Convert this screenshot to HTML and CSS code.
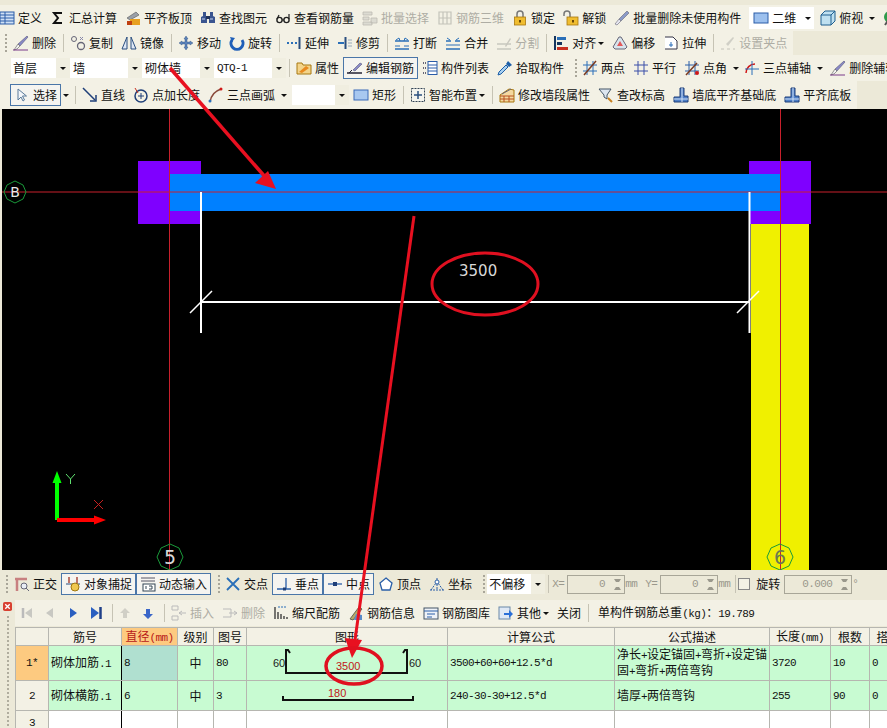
FILE: index.html
```html
<!DOCTYPE html>
<html lang="zh-CN">
<head>
<meta charset="utf-8">
<title>钢筋编辑</title>
<link rel="stylesheet" href="styles.css">
</head>
<body>
<div class="page">
  <div class="bar r1">
    <div class="it"><svg class="ic" viewBox="0 0 16 16"><rect x="1" y="2" width="14" height="12" fill="#cfe0f5" stroke="#2a5ca8"/><path d="M1 5h14M1 8h14M1 11h14M6 2v12" stroke="#2a5ca8"/></svg><span>定义</span></div>
    <div class="it"><svg class="ic" viewBox="0 0 16 16"><path d="M12 3H4l4 5-4 5h8" fill="none" stroke="#111" stroke-width="2"/></svg><span>汇总计算</span></div>
    <div class="it"><svg class="ic" viewBox="0 0 16 16"><path d="M2 8l9-6 3 3-9 5z" fill="#9aa0a8" stroke="#555" stroke-width=".6"/><rect x="5" y="9" width="10" height="6" fill="#e8a020"/><rect x="2" y="11" width="5" height="4" fill="#c04010"/></svg><span>平齐板顶</span></div>
    <div class="it"><svg class="ic" viewBox="0 0 16 16"><path d="M3 2h3v4l1 1v6H1V7l2-1zM10 2h3v4l2 1v6H9V7l1-1z" fill="#3a5590"/><rect x="6" y="6" width="4" height="3" fill="#22345c"/><path d="M2 9h3M10 9h3" stroke="#c9d6ee"/></svg><span>查找图元</span></div>
    <div class="it"><svg class="ic" viewBox="0 0 16 16"><circle cx="4.500" cy="10" r="2.600" fill="none" stroke="#222" stroke-width="1.400"/><circle cx="11.500" cy="10" r="2.600" fill="none" stroke="#222" stroke-width="1.400"/><path d="M2 9l2-4M14 9V4M7 10h2" stroke="#222" stroke-width="1.200" fill="none"/></svg><span>查看钢筋量</span></div>
    <div class="it off"><svg class="ic" viewBox="0 0 16 16"><path d="M1 2h9v3H1zM1 7h6v3H1zM1 12h9v3H1zM9 8h6v5H9z" fill="#dcdbd2" stroke="#bcbbb2" stroke-width=".8"/></svg><span>批量选择</span></div>
    <div class="it off"><svg class="ic" viewBox="0 0 16 16"><path d="M2 2h12v12H2zM6 2v12M10 2v12M2 8h12" fill="none" stroke="#c4c3ba" stroke-width="1.200"/></svg><span>钢筋三维</span></div>
    <div class="it"><svg class="ic" viewBox="0 0 16 16"><path d="M5 7V4a3 3 0 016 0v3" fill="none" stroke="#777" stroke-width="1.500"/><rect x="2.500" y="7" width="11" height="8" fill="#f0bd30" stroke="#a87810" stroke-width=".8"/><rect x="7" y="10" width="2" height="2.500" fill="#6a4806"/></svg><span>锁定</span></div>
    <div class="it"><svg class="ic" viewBox="0 0 16 16"><path d="M1 6V4a3 3 0 016 0v3" fill="none" stroke="#777" stroke-width="1.500"/><rect x="4" y="7" width="11" height="8" fill="#f0bd30" stroke="#a87810" stroke-width=".8"/><rect x="9" y="10" width="2" height="2.500" fill="#6a4806"/></svg><span>解锁</span></div>
    <div class="it"><svg class="ic" viewBox="0 0 16 16"><path d="M13 1l2 2-8 8-2-2z" fill="#8a9ac8" stroke="#556" stroke-width=".5"/><path d="M5 9l2 2-4 4-2-1z" fill="#e6e6f0" stroke="#667" stroke-width=".6"/></svg><span>批量删除未使用构件</span></div>
    <div class="view"><svg class="ic" viewBox="0 0 16 16"><rect x="1" y="3" width="14" height="10" fill="#9cc0ee" stroke="#2a5ca8"/></svg><span>二维</span><i class="ar in"></i></div>
    <div class="it tight"><svg class="ic" viewBox="0 0 16 16"><path d="M1 5l4-4h10v10l-4 4H1z" fill="#bfe0f0" stroke="#1f5f8f"/><path d="M1 5h10v10M11 5l4-4" fill="none" stroke="#1f5f8f"/></svg><span>俯视</span></div>
    <i class="ar far"></i>
    <div class="it"><svg class="ic" viewBox="0 0 16 16"><circle cx="8" cy="7" r="6" fill="#2e9a4a"/><path d="M3 15l4-6" stroke="#555" stroke-width="2"/></svg></div>
  </div>

  <div class="bar r2">
    <i class="grip"></i>
    <div class="it"><svg class="ic" viewBox="0 0 16 16"><path d="M14 1l1 1-8 9-2-2z" fill="#8a8ac8" stroke="#446" stroke-width=".5"/><path d="M5 9l2 2-3 3-3 1z" fill="#f2f2f2" stroke="#555" stroke-width=".6"/><path d="M0 15h15" stroke="#7a3a8a"/></svg><span>删除</span></div>
    <i class="sep"></i>
    <div class="it"><svg class="ic" viewBox="0 0 16 16"><circle cx="4" cy="4" r="2.500" fill="none" stroke="#667" stroke-width="1"/><circle cx="11" cy="11" r="3.500" fill="none" stroke="#667" stroke-width="1.300"/><path d="M10 2l3 3M13 2l-3 3" stroke="#88a"/></svg><span>复制</span></div>
    <div class="it"><svg class="ic" viewBox="0 0 16 16"><path d="M6 2L1 14h5zM10 2l5 12h-5z" fill="#dfe8f5" stroke="#2a4f7f"/></svg><span>镜像</span></div>
    <i class="sep"></i>
    <div class="it"><svg class="ic" viewBox="0 0 16 16"><path d="M8 1l2 3H9v3h3V6l3 2-3 2V9H9v3h1l-2 3-2-3h1V9H4v1L1 8l3-2v1h3V4H6z" fill="#5b82b8" stroke="#2a4f7f" stroke-width=".4"/></svg><span>移动</span></div>
    <div class="it"><svg class="ic" viewBox="0 0 16 16"><path d="M3 5a6 6 0 1010 0" fill="none" stroke="#1f5fb8" stroke-width="3"/><path d="M1 2l5 1-3 4z" fill="#1f5fb8"/></svg><span>旋转</span></div>
    <i class="sep"></i>
    <div class="it"><svg class="ic" viewBox="0 0 16 16"><path d="M1 7h2v2H1zM5 7h2v2H5zM9 7h2v2H9z" fill="#2a6fb8"/><path d="M13.500 2v12" stroke="#2a4f7f" stroke-width="2"/></svg><span>延伸</span></div>
    <div class="it"><svg class="ic" viewBox="0 0 16 16"><path d="M1 8h6" stroke="#2a6fb8" stroke-width="2"/><path d="M8.500 2v12" stroke="#2a4f7f" stroke-width="2"/><path d="M11 5h4M11 8h4M11 11h4" stroke="#9ab" /></svg><span>修剪</span></div>
    <i class="sep"></i>
    <div class="it"><svg class="ic" viewBox="0 0 16 16"><path d="M1 6h14M1 14h14" stroke="#2a6fb8" stroke-width="1.500"/><path d="M5 3L2 5M5 3l1 3M11 3l3 2M11 3l-1 3M6 11H1M10 11h5" stroke="#2a6fb8"/></svg><span>打断</span></div>
    <div class="it"><svg class="ic" viewBox="0 0 16 16"><path d="M1 6h5M10 6h5M1 14h14" stroke="#2a6fb8" stroke-width="1.500"/><path d="M2 3l3 2M14 3l-3 2M1 10h14" stroke="#2a6fb8"/></svg><span>合并</span></div>
    <div class="it off"><svg class="ic" viewBox="0 0 16 16"><path d="M1 9h14M1 14h14" stroke="#c8c7be" stroke-width="1.300"/><path d="M9 11l5-8 1 1-5 8z" fill="#c8c7be"/></svg><span>分割</span></div>
    <i class="sep"></i>
    <div class="it"><svg class="ic" viewBox="0 0 16 16"><path d="M2 1v14" stroke="#16365f" stroke-width="2"/><rect x="4" y="2" width="9" height="3" fill="#2a6fb8"/><rect x="4" y="7" width="5" height="3" fill="#16365f"/><rect x="4" y="12" width="11" height="3" fill="#c83020"/></svg><span>对齐</span></div>
    <i class="ar"></i>
    <div class="it"><svg class="ic" viewBox="0 0 16 16"><path d="M1 12l6-10h2l6 10-2 2H3z" fill="#d8e4ec" stroke="#667"/><path d="M5 11l3-5 3 5z" fill="#e25a5a"/></svg><span>偏移</span></div>
    <div class="it"><svg class="ic" viewBox="0 0 16 16"><path d="M2 2h8l4 4v8H2" fill="#fff" stroke="#334"/><path d="M8 7v5M6 10h4" stroke="#2a6fb8"/></svg><span>拉伸</span></div>
    <i class="sep"></i>
    <div class="it off"><svg class="ic" viewBox="0 0 16 16"><path d="M13 2l1 1-6 8-2-2z" fill="#d0cfc6"/><path d="M1 14h3M7 14h3M13 14h2" stroke="#c4c3ba"/></svg><span>设置夹点</span></div>
  </div>

  <div class="bar r3">
    <div class="sels">
      <div class="sel s-a"><span>首层</span><i class="ar sa"></i></div>
      <div class="sel s-b"><span>墙</span><i class="ar sa"></i></div>
      <div class="sel s-b"><span>砌体墙</span><i class="ar sa"></i></div>
      <div class="sel s-b"><span class="m">QTQ-1</span><i class="ar sa"></i></div>
    </div>
    <i class="sep pull"></i>
    <div class="it"><svg class="ic" viewBox="0 0 16 16"><path d="M1 3h5l1 2h8v9H1z" fill="#f3d48a" stroke="#a87810"/><path d="M3 12l7-6 3 2-7 5z" fill="#e88a20"/></svg><span>属性</span></div>
    <div class="it on"><svg class="ic" viewBox="0 0 16 16"><path d="M13 3l2 1-7 7-2-1z" fill="#8a8ac8" stroke="#446" stroke-width=".5"/><path d="M0 13h15" stroke="#223" stroke-width="1.500"/><path d="M5 10l-3 3" stroke="#223"/></svg><span>编辑钢筋</span></div>
    <div class="it"><svg class="ic" viewBox="0 0 16 16"><path d="M1 3h3M1 8h3M1 13h3" stroke="#667" stroke-width="2" stroke-dasharray="1 1"/><rect x="6" y="1.500" width="9" height="13" fill="#fff" stroke="#2a5ca8"/><path d="M6 5h9M6 8h9M6 11h9" stroke="#2a5ca8"/></svg><span>构件列表</span></div>
    <div class="it"><svg class="ic" viewBox="0 0 16 16"><path d="M11 1l4 4-3 2-3-3z" fill="#1d5fa8"/><path d="M9 5l2 2-7 7-3 1 1-3z" fill="#a8d0f0" stroke="#1d5fa8"/></svg><span>拾取构件</span></div>
    <i class="grip"></i>
    <div class="it"><svg class="ic" viewBox="0 0 16 16"><path d="M5 1v14M11 1v14M1 5h14M1 11h14" stroke="#2a6fb8"/><path d="M2 15L14 1" stroke="#7a3a20" stroke-width="1.500"/></svg><span>两点</span></div>
    <div class="it"><svg class="ic" viewBox="0 0 16 16"><path d="M5 1v14M11 1v14M1 5h14M1 11h14" stroke="#3a4fa8"/></svg><span>平行</span></div>
    <div class="it"><svg class="ic" viewBox="0 0 16 16"><path d="M5 1v14M11 1v14M1 5h14M1 11h14" stroke="#2a5fa8"/><path d="M2 15L13 3" stroke="#7a3a20" stroke-width="1.500"/><circle cx="13" cy="13" r="2" fill="#d01818"/></svg><span>点角</span></div>
    <i class="ar far"></i>
    <div class="it tight"><svg class="ic" viewBox="0 0 16 16"><path d="M2 13a9 9 0 019-9" fill="none" stroke="#d01818" stroke-width="1.500"/><path d="M8 1v14M1 9h14" stroke="#2a6fb8"/></svg><span>三点辅轴</span></div>
    <i class="ar far"></i>
    <div class="it"><svg class="ic" viewBox="0 0 16 16"><path d="M14 1l1 1-8 9-2-2z" fill="#8a8ac8" stroke="#446" stroke-width=".5"/><path d="M5 9l2 2-3 3-3 1z" fill="#f2f2f2" stroke="#555" stroke-width=".6"/><path d="M0 15h15" stroke="#7a3a8a"/></svg><span>删除辅轴</span></div>
  </div>

  <div class="bar r4">
    <div class="it on"><svg class="ic" viewBox="0 0 16 16"><path d="M4 2v11l3-3 2 4 1.500-1-2-4h4z" fill="#f4f6fa" stroke="#5a7a9a"/></svg><span>选择</span></div>
    <i class="ar"></i>
    <i class="sep"></i>
    <div class="it"><svg class="ic" viewBox="0 0 16 16"><path d="M1 1l12 12" stroke="#1f3f78" stroke-width="1.500"/><path d="M14 8v6H8" fill="none" stroke="#1f3f78" stroke-width="1.500"/></svg><span>直线</span></div>
    <div class="it"><svg class="ic" viewBox="0 0 16 16"><circle cx="8" cy="9" r="6" fill="none" stroke="#1f3f78" stroke-width="1.500"/><path d="M8 6v6M5 9h6" stroke="#1f3f78"/><path d="M2 1l3 5" stroke="#c83020"/></svg><span>点加长度</span></div>
    <div class="it"><svg class="ic" viewBox="0 0 16 16"><path d="M2 15C3 8 7 4 13 2" fill="none" stroke="#8a4a3a" stroke-width="1.500"/><circle cx="13" cy="2" r="1.500" fill="#d01818"/><circle cx="2" cy="14" r="1.500" fill="#2a6fb8"/></svg><span>三点画弧</span></div>
    <i class="ar far"></i>
    <div class="sel s-c"><span></span><i class="ar sa"></i></div>
    <div class="it"><svg class="ic" viewBox="0 0 16 16"><rect x="1" y="3" width="14" height="10" fill="#a8c8f0" stroke="#3a6ab8"/></svg><span>矩形</span></div>
    <i class="sep"></i>
    <div class="it"><svg class="ic" viewBox="0 0 16 16"><rect x="1.500" y="1.500" width="13" height="13" fill="#f4f4ee" stroke="#345" stroke-dasharray="2 1"/><path d="M8 4v8M4 8h8" stroke="#2a4f7f" stroke-width="1.500"/></svg><span>智能布置</span></div>
    <i class="ar"></i>
    <i class="sep"></i>
    <div class="it"><svg class="ic" viewBox="0 0 16 16"><path d="M1 15V8l9-6 5 1v12z" fill="#f4d8a0" stroke="#a87810"/><path d="M1 9h14M1 12h14M5 9v3M10 9v3M10 12v3M5 12v3" stroke="#b85020"/><path d="M3 7l9-5" stroke="#667"/></svg><span>修改墙段属性</span></div>
    <div class="it"><svg class="ic" viewBox="0 0 16 16"><path d="M1 2h12L9 8v4L6 10V8z" fill="#dde6f0" stroke="#456"/><path d="M10 11l4 4" stroke="#c88020" stroke-width="2"/></svg><span>查改标高</span></div>
    <div class="it"><svg class="ic" viewBox="0 0 16 16"><path d="M7 1h4v8h4v6H1v-5h6z" fill="#4f80c8" stroke="#1f3f78"/><path d="M9 1v14M1 12h14" stroke="#d0e0f4"/></svg><span>墙底平齐基础底</span></div>
    <div class="it"><svg class="ic" viewBox="0 0 16 16"><path d="M7 1h4v8h4v6H1v-5h6z" fill="#4f80c8" stroke="#1f3f78"/><path d="M9 1v14M1 12h14" stroke="#d0e0f4"/></svg><span>平齐底板</span></div>
  </div>

  <div class="canvas">
    <svg class="draw" viewBox="2 109 885 461">
      <rect x="138" y="161" width="63" height="63" fill="#7f00ff"/>
      <rect x="749" y="161" width="62" height="63" fill="#7f00ff"/>
      <rect x="751" y="224" width="58" height="346" fill="#f0f000"/>
      <rect x="170" y="174" width="610" height="37" fill="#0080ff"/>
      <path d="M2 192H887" stroke="#c8202c"/>
      <path d="M169.500 109V570M780.500 109V570" stroke="#c8202c"/>
      <path d="M201 192V333M749.500 192V333M201 302H749" stroke="#fff" stroke-width="2"/>
      <path d="M190 313L212 291M737 313L759 291" stroke="#fff" stroke-width="1.500"/>
      <text class="dim" x="459" y="276">3500</text>
      <polygon class="axis" points="15,181 23,185 26,192 23,199 15,203 7,199 4,192 7,185"/>
      <text class="lab-w" x="15" y="197" text-anchor="middle">B</text>
      <polygon class="axis" points="170,544 179,548 183,557 179,566 170,570 161,566 157,557 161,548"/>
      <text class="grid-n" x="170" y="564" text-anchor="middle">5</text>
      <polygon class="axis" points="780,544 789,548 793,557 789,566 780,570 771,566 767,557 771,548"/>
      <text class="grid-n dark" x="780" y="564" text-anchor="middle">6</text>
      <path d="M57 483V520" stroke="#00ff00" stroke-width="4"/>
      <path d="M57 471l4.500 12h-9z" fill="#00ff00"/>
      <path d="M57 520H95" stroke="#ff0000" stroke-width="4"/>
      <path d="M106 520l-12 -4.500v9z" fill="#ff0000"/>
      <path d="M66 474l4.500 5 4.500 -5M70.500 479v5" stroke="#60e070" fill="none"/>
      <path d="M94 500l9 9M103 500l-9 9" stroke="#c82020" fill="none"/>
    </svg>
  </div>

  <div class="bar r5">
    <i class="grip"></i>
    <div class="it"><svg class="ic" viewBox="0 0 16 16"><path d="M1 3h12M3 3v12" stroke="#c88080" stroke-width="2.500"/><circle cx="10" cy="10" r="3" fill="#e8ecf4" stroke="#667"/><path d="M12 12l3 3" stroke="#667"/></svg><span>正交</span></div>
    <div class="it on"><svg class="ic" viewBox="0 0 16 16"><path d="M4 1v6M12 1v6" stroke="#a03020" stroke-width="1.300"/><path d="M1 8h14" stroke="#2a4f7f"/><circle cx="10" cy="11" r="4" fill="#f0c850" stroke="#a07810"/></svg><span>对象捕捉</span></div>
    <div class="it on"><svg class="ic" viewBox="0 0 16 16"><path d="M1 2h14M1 5h14" stroke="#556"/><rect x="3" y="8" width="12" height="7" fill="#fff" stroke="#345"/><path d="M6 10v3M9 10h3v3h-3" stroke="#345" fill="none"/></svg><span>动态输入</span></div>
    <i class="grip"></i>
    <div class="it"><svg class="ic" viewBox="0 0 16 16"><path d="M2 2l12 12M14 2L2 14" stroke="#2a6fb8" stroke-width="1.800"/></svg><span>交点</span></div>
    <div class="it on"><svg class="ic" viewBox="0 0 16 16"><path d="M10 2v11M1 13h14" stroke="#2a5fa8" stroke-width="1.300"/><rect x="7" y="11.500" width="3" height="3" fill="#1f3f78"/></svg><span>垂点</span></div>
    <div class="it on"><svg class="ic" viewBox="0 0 16 16"><path d="M1 8h14" stroke="#2a5fa8" stroke-width="1.300"/><rect x="6" y="6" width="4" height="4" fill="#1f3f78"/></svg><span>中点</span></div>
    <div class="it"><svg class="ic" viewBox="0 0 16 16"><path d="M8 2l6 5-2 7H4L2 7z" fill="#fff" stroke="#2a5fa8" stroke-width="1.300"/></svg><span>顶点</span></div>
    <div class="it"><svg class="ic" viewBox="0 0 16 16"><path d="M1 14h14M8 2v12M2 14l5-7M14 14L9 7" stroke="#2a5fa8" stroke-dasharray="2 1"/><circle cx="8" cy="6" r="2" fill="#fff" stroke="#2a5fa8"/></svg><span>坐标</span></div>
    <i class="grip"></i>
    <div class="sel s-d"><span>不偏移</span><i class="ar sa"></i></div>
    <i class="sep pull after"></i>
    <span class="lab m">X=</span>
    <div class="inp wide"><span class="m">0</span><i class="spin"></i></div>
    <span class="unit m">mm</span>
    <span class="lab m">Y=</span>
    <div class="inp wide"><span class="m">0</span><i class="spin"></i></div>
    <span class="unit m">mm</span>
    <i class="sep pull"></i>
    <i class="check"></i>
    <span class="rot">旋转</span>
    <div class="inp deg"><span class="m">0.000</span><i class="spin"></i></div>
    <span class="unit m">°</span>
  </div>

  <div class="lower">
    <div class="strip">
      <svg class="x" viewBox="0 0 10 10"><rect width="10" height="10" rx="2" fill="#d84030"/><path d="M2.500 2.500l5 5M7.500 2.500l-5 5" stroke="#fff" stroke-width="1.500"/></svg>
      <i class="dots"></i>
    </div>
    <div class="panel">
      <div class="bar r6">
        <svg class="nav" viewBox="0 0 12 14"><path d="M2 2v10" stroke="#bbb" stroke-width="2.500"/><path d="M11 2v10L4 7z" fill="#c8c8c2"/></svg>
        <svg class="nav" viewBox="0 0 12 14"><path d="M9 2v10L2 7z" fill="#c8c8c2"/></svg>
        <svg class="nav" viewBox="0 0 12 14"><path d="M3 2v10l7-5z" fill="#2a5fc0"/></svg>
        <svg class="nav" viewBox="0 0 12 14"><path d="M1 1v12l8-6z" fill="#2a5fc0"/><path d="M10.500 1v12" stroke="#1f3f88" stroke-width="2.500"/></svg>
        <i class="sep"></i>
        <svg class="nav" viewBox="0 0 12 14"><path d="M6 2l5 5H8v5H4V7H1z" fill="#d0cfc6"/></svg>
        <svg class="nav" viewBox="0 0 12 14"><path d="M6 13l5-5H8V3H4v5H1z" fill="#3a66c8"/></svg>
        <i class="sep"></i>
        <div class="it off"><svg class="ic" viewBox="0 0 16 16"><path d="M1 1h6v4H1zM1 11h6v4H1z" fill="none" stroke="#bbb"/><path d="M8 8h7M8 8l3-2M8 8l3 2" stroke="#bbb"/></svg><span>插入</span></div>
        <div class="it off"><svg class="ic" viewBox="0 0 16 16"><path d="M1 4h8M1 12h8M9 4v8" fill="none" stroke="#bbb"/><path d="M7 8h8M15 8l-3-2M15 8l-3 2" stroke="#bbb"/></svg><span>删除</span></div>
        <div class="it"><svg class="ic" viewBox="0 0 16 16"><path d="M2 2v12M5 7v7M8 9v5M11 11v3M14 12v2" stroke="#333" stroke-width="1.300"/><path d="M5 2h8" stroke="#2a6fb8" stroke-dasharray="2 1"/></svg><span>缩尺配筋</span></div>
        <div class="it"><svg class="ic" viewBox="0 0 16 16"><path d="M2 14l9-12 3 2-9 11z" fill="#b8a868" stroke="#665"/><path d="M8 9l6 1v5H6z" fill="#5a8ac8"/></svg><span>钢筋信息</span></div>
        <div class="it"><svg class="ic" viewBox="0 0 16 16"><rect x="1" y="3" width="14" height="11" fill="#eef2f8" stroke="#456"/><path d="M1 6h14M4 9h8M4 12h5" stroke="#2a5fa8"/></svg><span>钢筋图库</span></div>
        <div class="it"><svg class="ic" viewBox="0 0 16 16"><rect x="1" y="2" width="11" height="12" fill="#dfe8f5" stroke="#6a88a8"/><path d="M6 8h5V5l4 4-4 4v-3H6z" fill="#2a6fd8"/></svg><span>其他</span></div>
        <i class="ar"></i>
        <span class="plain">关闭</span>
        <i class="sep"></i>
        <span class="total">单构件钢筋总重<span class="m">(kg)</span>：<span class="m">19.789</span></span>
      </div>
      <table class="grid">
        <colgroup>
          <col class="c0"><col class="c1"><col class="c2"><col class="c3"><col class="c4"><col class="c5"><col class="c6"><col class="c7"><col class="c8"><col class="c9"><col class="c10">
        </colgroup>
        <thead>
          <tr class="h">
            <th></th><th>筋号</th><th class="pick red">直径<span class="m">(mm)</span></th><th>级别</th><th>图号</th><th>图形</th><th>计算公式</th><th>公式描述</th><th>长度<span class="m">(mm)</span></th><th>根数</th><th>搭接</th>
          </tr>
        </thead>
        <tbody>
          <tr class="rw tall">
            <th class="pick m">1*</th><td class="fz">砌体加筋<span class="m">.1</span></td><td class="cur m">8</td><td class="ctr">中</td><td class="m">80</td>
            <td class="shape"><svg viewBox="0 0 200 34"><path d="M43 7l-2 -3h-2V27H160V4h-2l-2 3" fill="none" stroke="#111" stroke-width="2"/><text class="tx" x="26" y="21">60</text><text class="tx" x="162" y="21">60</text><text class="tx rd" x="89" y="24">3500</text></svg></td>
            <td class="m">3500+60+60+12.5*d</td>
            <td class="two">净长<span class="m">+</span>设定锚固<span class="m">+</span>弯折<span class="m">+</span>设定锚<br>固<span class="m">+</span>弯折<span class="m">+</span>两倍弯钩</td>
            <td class="m">3720</td><td class="m">10</td><td class="m">0</td>
          </tr>
          <tr class="rw mid">
            <th class="m">2</th><td class="fz">砌体横筋<span class="m">.1</span></td><td class="m">6</td><td class="ctr">中</td><td class="m">3</td>
            <td class="shape"><svg viewBox="0 0 200 29"><path d="M36 15v4H166v-4" fill="none" stroke="#111" stroke-width="2"/><text class="tx rd" x="81" y="16">180</text></svg></td>
            <td class="m">240-30-30+12.5*d</td><td>墙厚<span class="m">+</span>两倍弯钩</td>
            <td class="m">255</td><td class="m">90</td><td class="m">0</td>
          </tr>
          <tr class="blank">
            <th class="m">3</th><td class="fz"></td><td></td><td></td><td></td><td></td><td></td><td></td><td></td><td></td><td></td>
          </tr>
        </tbody>
      </table>
    </div>
  </div>

  <svg class="marks" viewBox="0 0 887 728">
    <path d="M170 68L266 178" stroke="#e81020" stroke-width="3.500"/>
    <path d="M276 189L268 171 255 183z" fill="#e81020"/>
    <path d="M414 216L355 640" stroke="#e81020" stroke-width="3"/>
    <path d="M352 658L345 638 362 640z" fill="#e81020"/>
    <ellipse cx="485" cy="284" rx="53" ry="31" fill="none" stroke="#e01020" stroke-width="3"/>
    <ellipse cx="354" cy="666" rx="28" ry="18" fill="none" stroke="#e01020" stroke-width="3.500"/>
  </svg>
</div>
</body>
</html>
```

FILE: styles.css
```css
* { box-sizing: border-box; }
html, body { margin: 0; padding: 0; }
.page {
  position: relative;
  width: 887px;
  height: 728px;
  overflow: hidden;
  background: #ece9d8;
  font: 12px/14px "Noto Sans CJK SC", "Liberation Sans", sans-serif;
  color: #111;
}
.m { font-family: "Liberation Mono", monospace; font-size: 11px; letter-spacing: -0.6px; }
i { display: block; font-style: normal; }

.bar { display: flex; align-items: center; gap: 8px; white-space: nowrap; }
.r1 { height: 26px; margin-top: 5px; background: #f3f1e5; }
.r2 { height: 24px; width: 793px; padding-left: 5px; background: #f3f1e5; }
.r3 { height: 26px; padding-left: 11px; background: #f3f1e5; }
.r4 { height: 28px; width: 857px; padding-left: 14px; background: #f3f1e5; }
.r5 { height: 28px; padding-left: 6px; }
.r6 { height: 26px; padding-left: 6px; margin-top: 2px; background: #f3f1e5; }

.it { display: flex; align-items: center; gap: 3px; flex: none; }
.it.tight { margin-left: -2px; }
.r1 > .it:first-child { margin-left: -1px; }
.ic { width: 16px; height: 16px; flex: none; }
.off { color: #aeada4; }
.on {
  margin: 0 -4px;
  padding: 2px 3px;
  border: 1px solid #4a76a8;
  background: #f5f4f0;
}
.sep { width: 1px; height: 18px; margin: 0 -2px 0 -1px; background: #c6c3b4; flex: none; }
.sep.pull { margin-left: -5px; }
.sep.after { margin-right: -5px; }
.grip {
  width: 2px; height: 18px; flex: none;
  margin: 0 -3px 0 3px;
  background: repeating-linear-gradient(#a9a699 0 2px, transparent 2px 4px);
}
.r2 > .grip, .r5 > .grip:first-child { margin: 0; margin-right: -2px; }
.ar {
  width: 0; height: 0; flex: none;
  margin-left: -6px;
  border: 3px solid transparent;
  border-top-color: #111;
  border-bottom: 0;
}
.ar.far, .on + .ar { margin-left: -2px; margin-right: -1px; }
.ar.in { margin-left: 6px; margin-right: 3px; }
.ar.sa { margin: 0 4px 0 auto; }

.view {
  display: flex; align-items: center; gap: 3px; flex: none;
  height: 22px; padding-left: 4px; background: #fff;
}
.sels { display: flex; flex: none; }
.sel {
  display: flex; align-items: center; flex: none;
  height: 20px; padding-left: 2px;
  background: linear-gradient(90deg, #fff 0 calc(100% - 14px), #f0eee0 calc(100% - 14px));
}
.s-a { width: 59px; }
.s-b { width: 72px; padding-left: 3px; }
.s-c { width: 57px; margin-left: -2px; margin-right: -4px; }
.s-d { width: 58px; margin-left: -3px; }

.canvas { height: 461px; margin-left: 2px; background: #000; }
.draw { display: block; width: 885px; height: 461px; }
.axis { fill: none; stroke: #1a9a3a; }
.dim { font: 15px "DejaVu Sans", sans-serif; fill: #d8d8d8; }
.lab-w { font: 14px "DejaVu Sans", sans-serif; fill: #e8e8e8; }
.grid-n { font: 19px "DejaVu Sans", sans-serif; fill: #d8d8d8; }
.grid-n.dark { fill: #6a7a50; }

.lab { margin-right: -5px; width: 12px; color: #9a988c; }
.unit { margin-left: -8px; color: #9a988c; width: 14px; }
.unit + .lab { margin-left: -2px; }
.rot { margin-left: -2px; flex: none; }
.inp {
  display: flex; align-items: center; justify-content: flex-end;
  height: 19px; flex: none; padding-right: 3px;
  border: 1px solid #a8a698; color: #9a988c; background: #ece9d8;
}
.wide { width: 58px; }
.deg { width: 68px; margin-left: -4px; }
.spin { width: 7px; height: 11px; margin-left: 9px;
  border-top: 3px solid #9a988c; border-bottom: 3px solid #9a988c;
  border-left: 2px solid transparent; border-right: 2px solid transparent; }
.check { width: 12px; height: 12px; border: 1px solid #888; background: #f3f1e5; margin-left: -4px; flex: none; }

.lower { display: flex; }
.strip { width: 15px; flex: none; display: flex; flex-direction: column; align-items: center; padding-top: 4px; }
.x { width: 9px; height: 9px; display: block; margin-right: 1px; }
.dots {
  width: 2px; height: 115px; margin-top: 5px;
  background: repeating-linear-gradient(#b0ad9e 0 2px, transparent 2px 4px);
}
.panel { flex: 1; min-width: 0; }
.nav { width: 12px; height: 14px; flex: none; margin-right: 3px; }
.plain, .total { flex: none; }
.total { margin-left: 3px; }

.grid {
  table-layout: fixed;
  width: 892px;
  margin-top: 1px;
  border-collapse: collapse;
  background: #fff;
}
.grid th, .grid td {
  border: 1px solid #b6b6b0;
  padding: 0 2px;
  font-weight: 400;
  overflow: hidden;
  white-space: nowrap;
  text-align: left;
  line-height: 12px;
}
.c0 { width: 33px; } .c1 { width: 73px; } .c2 { width: 56px; } .c3 { width: 36px; } .c4 { width: 33px; }
.c5 { width: 201px; } .c6 { width: 167px; } .c7 { width: 155px; } .c8 { width: 61px; } .c9 { width: 39px; } .c10 { width: 38px; }
.grid .h { height: 18px; background: #f3f1e5; }
.grid .h th { text-align: center; }
.grid tbody th { text-align: center; background: #f3f1e5; }
.grid .pick, .grid tbody th.pick { background: #fdca80; }
.red { color: #b81818; }
.rw { background: #c8fbd2; }
.tall { height: 34px; }
.mid { height: 28px; }
.blank { height: 24px; }
.grid .fz { border-right: 1px solid #000; }
.grid .cur { background: #b0e0d0; border-left: 1px solid #000; }
.grid .ctr { text-align: center; }
.grid .two { line-height: 13px; }
.grid .shape { padding: 0; }
.shape svg { display: block; width: 200px; }
.tx { font: 11px "Liberation Sans", sans-serif; fill: #222; }
.tx.rd { fill: #c01818; }

.marks { position: absolute; left: 0; top: 0; width: 887px; height: 728px; pointer-events: none; }
```
